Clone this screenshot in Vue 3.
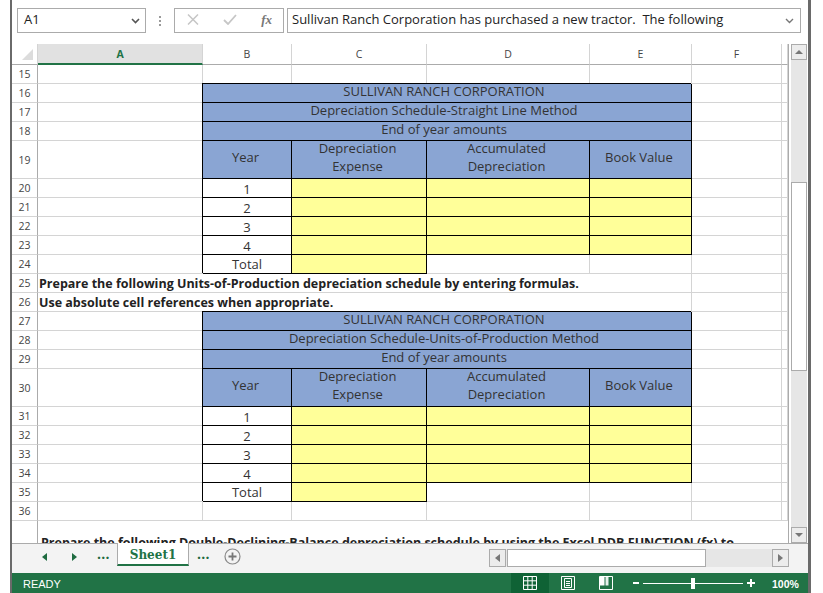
<template>
  <div class="window">
    <div class="formula-bar">
      <div class="name-box">
        <span>A1</span>
        <svg class="chev" width="9" height="6" viewBox="0 0 9 6"><path d="M1 1l3.5 3.5L8 1" fill="none" stroke="#555" stroke-width="1.6" /></svg>
      </div>
      <div class="dots"><i></i><i></i><i></i></div>
      <div class="fx-box">
        <svg width="12" height="11" viewBox="0 0 12 11"><path d="M1 .5l10 10M11 .5L1 10.500" fill="none" stroke="#c6c6c6" stroke-width="1.5" /></svg>
        <svg width="14" height="11" viewBox="0 0 14 11"><path d="M1 6l4 4 8-9" fill="none" stroke="#c6c6c6" stroke-width="1.8" /></svg>
        <span class="fx">fx</span>
      </div>
      <div class="formula-input">
        <span>Sullivan Ranch Corporation has purchased a new tractor.&nbsp; The following</span>
        <svg class="chev" width="9" height="6" viewBox="0 0 9 6"><path d="M1 1l3.5 3.5L8 1" fill="none" stroke="#777" stroke-width="1.4" /></svg>
      </div>
    </div>

    <div class="sheet-area">
      <div class="sheet">
        <div class="grid">
          <div class="col-head corner"><b></b></div>
          <div v-for="c in columns" :key="c" class="col-head" :class="{ selected: c === 'A' }">{{ c }}</div>
          <template v-for="row in rows" :key="row.num">
            <div class="row-head">{{ row.num }}</div>
            <div
              v-for="(cell, i) in row.cells"
              :key="i"
              class="cell"
              :class="cell.type"
              :style="{ gridColumn: 'span ' + (cell.span || 1) }"
            >
              <span v-if="cell.lines"><template v-for="l in cell.lines" :key="l">{{ l }}<br /></template></span>
              <span v-else>{{ cell.text }}</span>
            </div>
          </template>
        </div>
      </div>
      <div class="vscroll">
        <div class="sb-btn"><span class="tri up"></span></div>
        <div class="v-track"><div class="v-thumb"></div></div>
        <div class="sb-btn"><span class="tri down"></span></div>
      </div>
    </div>

    <div class="tab-bar">
      <div class="tab-nav">
        <span class="tri g-left"></span>
        <span class="tri g-right"></span>
      </div>
      <span class="more first">...</span>
      <div class="tab">Sheet1</div>
      <span class="more">...</span>
      <svg class="add" width="17" height="17" viewBox="0 0 17 17">
        <circle cx="8.5" cy="8.5" r="7.5" fill="none" stroke="#8a8a8a" stroke-width="1.2" />
        <path d="M8.500 4.500v8M4.500 8.500h8" stroke="#777" stroke-width="1.800" />
      </svg>
      <div class="hscroll">
        <div class="sb-btn h"><span class="tri h-left"></span></div>
        <div class="h-track"><div class="h-thumb"></div></div>
        <div class="sb-btn h"><span class="tri h-right"></span></div>
      </div>
    </div>

    <div class="status-bar">
      <span class="ready">READY</span>
      <div class="views">
        <div class="view active">
          <svg width="14" height="14" viewBox="0 0 14 14"><path d="M.5.5h13v13H.5zM.5 4.800h13M.5 9.200h13M4.800.5v13M9.200.5v13" fill="none" stroke="#fff" /></svg>
        </div>
        <div class="view">
          <svg width="14" height="14" viewBox="0 0 14 14"><path d="M.5.5h13v13H.5z" fill="none" stroke="#fff" /><path d="M3.500 2.500h7v9h-7zM5 5.500h4M5 7.500h4M5 9.500h4" fill="none" stroke="#fff" /></svg>
        </div>
        <div class="view">
          <svg width="14" height="14" viewBox="0 0 14 14"><path d="M.5.5h13v13H.5z" fill="none" stroke="#fff" /><path d="M1 1h4.500v8.500H1z" fill="#fff" /><path d="M6.500 1H9.500v8.500H6.500z" fill="#e8f1ec" /></svg>
        </div>
      </div>
      <div class="zoom">
        <span class="minus"></span>
        <div class="slider"><i></i></div>
        <span class="plus"></span>
      </div>
      <span class="pct">100%</span>
    </div>
  </div>
</template>

<script setup>
const columns = ['A', 'B', 'C', 'D', 'E', 'F', '']

const rowHeights = { 19: 38, 30: 38 }

// blank grid row: one plain cell per column
function blank() {
  return Array.from({ length: 7 }, () => ({ type: 'plain' }))
}

function trailing() {
  return [{ type: 'plain' }, { type: 'plain' }]
}

function scheduleRows(start, method) {
  const out = []
  const titles = ['SULLIVAN RANCH CORPORATION', method, 'End of year amounts']
  titles.forEach((t, i) => {
    out.push({
      num: start + i,
      cells: [{ type: 'plain' }, { type: 'head title', span: 4, text: t }, ...trailing()]
    })
  })
  out.push({
    num: start + 3,
    cells: [
      { type: 'plain' },
      { type: 'head', text: 'Year' },
      { type: 'head', lines: ['Depreciation', 'Expense'] },
      { type: 'head', lines: ['Accumulated', 'Depreciation'] },
      { type: 'head', text: 'Book Value' },
      ...trailing()
    ]
  })
  for (let y = 1; y <= 4; y++) {
    out.push({
      num: start + 3 + y,
      cells: [
        { type: 'plain' },
        { type: 'year num', text: String(y) },
        { type: 'input' },
        { type: 'input' },
        { type: 'input' },
        ...trailing()
      ]
    })
  }
  out.push({
    num: start + 8,
    cells: [
      { type: 'plain' },
      { type: 'year', text: 'Total' },
      { type: 'input' },
      { type: 'plain' },
      { type: 'plain' },
      ...trailing()
    ]
  })
  return out
}

function note(num, text) {
  return { num, cells: [{ type: 'note', span: 5, text }, ...trailing()] }
}

const rows = [
  { num: 15, cells: blank() },
  ...scheduleRows(16, 'Depreciation Schedule-Straight Line Method'),
  note(25, 'Prepare the following Units-of-Production depreciation schedule by entering formulas.'),
  note(26, 'Use absolute cell references when appropriate.'),
  ...scheduleRows(27, 'Depreciation Schedule-Units-of-Production Method'),
  { num: 36, cells: blank() },
  {
    num: '',
    cells: [
      {
        type: 'note tail',
        span: 7,
        text: 'Prepare the following Double-Declining-Balance depreciation schedule by using the Excel DDB FUNCTION (fx) to'
      }
    ]
  }
]

const gridRows = '21px ' + rows.map((r) => (rowHeights[r.num] || (r.num === '' ? 60 : 19)) + 'px').join(' ')
</script>

<style scoped>
.window {
  box-sizing: border-box;
  width: 801px;
  height: 593px;
  margin-left: 10px;
  border-left: 2px solid #6a6a6a;
  border-right: 3px solid #6a6a6a;
  display: flex;
  flex-direction: column;
  font-family: "Open Sans", "Liberation Sans", sans-serif;
  color: #222;
  overflow: hidden;
}

.formula-bar {
  height: 44px;
  flex: none;
  box-sizing: border-box;
  padding: 8px 8px 11px 5px;
  display: flex;
  background: #fff;
  font-size: 12px;
}

.name-box,
.fx-box,
.formula-input {
  box-sizing: border-box;
  border: 1px solid #ababab;
  display: flex;
  align-items: center;
  flex: none;
  padding-bottom: 4px;
}

.fx-box {
  padding-bottom: 2px;
}

.name-box {
  width: 129px;
  padding-left: 6px;
  padding-right: 5px;
  justify-content: space-between;
  font-size: 13px;
}

.chev {
  margin-top: 4px;
}

.dots {
  width: 28px;
  flex: none;
  display: flex;
  flex-direction: column;
  align-items: center;
  justify-content: center;
  gap: 2px;
}

.dots i {
  width: 2px;
  height: 2px;
  background: #9a9a9a;
}

.fx-box {
  width: 110px;
  padding-left: 12px;
  padding-right: 11px;
  justify-content: space-between;
}

.fx {
  font-family: "Liberation Serif", serif;
  font-style: italic;
  font-weight: 700;
  font-size: 13px;
  color: #777;
}

.formula-input {
  width: 514px;
  margin-left: 3px;
  padding-left: 4px;
  padding-right: 6px;
  justify-content: space-between;
  font-size: 13px;
  white-space: nowrap;
}

.sheet-area {
  flex: none;
  height: 499px;
  display: flex;
}

.sheet {
  width: 777px;
  flex: none;
  box-sizing: border-box;
  border-right: 1px solid #ababab;
  overflow: hidden;
}

.grid {
  display: grid;
  grid-template-columns: 26px 165px 89px 135px 163px 102px 90px 6px;
  grid-template-rows: v-bind(gridRows);
}

.col-head,
.row-head,
.cell {
  box-sizing: border-box;
  min-width: 0;
}

.col-head {
  border-right: 1px solid #d4d4d4;
  border-bottom: 1px solid #ababab;
  display: flex;
  align-items: center;
  justify-content: center;
  font-size: 10.5px;
  color: #444;
  background: #fff;
}

.col-head.corner {
  border-right-color: #d4d4d4;
  position: relative;
}

.corner b {
  position: absolute;
  right: 4px;
  bottom: 4px;
  width: 0;
  height: 0;
  border-left: 11px solid transparent;
  border-bottom: 11px solid #dcdcdc;
}

.col-head.selected {
  background: #e1e1e1;
  border-bottom: 2px solid #217346;
  color: #217346;
  font-weight: 700;
}

.row-head {
  border-right: 1px solid #ababab;
  border-bottom: 1px solid #d4d4d4;
  display: flex;
  align-items: center;
  justify-content: center;
  font-size: 10.5px;
  color: #444;
}

.cell {
  border-right: 1px solid #d4d4d4;
  border-bottom: 1px solid #d4d4d4;
  display: flex;
  font-size: 13px;
  color: #333;
  white-space: nowrap;
  line-height: 18px;
  background: #fff;
}

.head,
.year,
.input {
  border-right-color: #000;
  border-bottom-color: #000;
  box-shadow: -1px -1px 0 0 #000;
}

.head {
  background: #8aa5d3;
  align-items: center;
  justify-content: center;
  text-align: center;
  padding: 0 3px 6px 0;
}

.head.title {
  padding: 0 6px 4px 0;
}

.year {
  align-items: center;
  justify-content: center;
  padding-bottom: 1px;
}

.year.num {
  padding: 1px 0 0;
}

.input {
  background: #ffff99;
}

.note {
  font-size: 12.5px;
  font-weight: 700;
  color: #222;
  align-items: flex-start;
  padding: 1px 0 0 1px;
  overflow: visible;
}

.tail {
  border: 0;
  padding: 13px 0 0 3px;
}

.vscroll {
  width: 19px;
  flex: none;
  box-sizing: border-box;
  padding-left: 2px;
  padding-right: 1px;
  display: flex;
  flex-direction: column;
  background: #fff;
}

.sb-btn {
  height: 16px;
  flex: none;
  box-sizing: border-box;
  border: 1px solid #ababab;
  background: #ececec;
  display: flex;
  align-items: center;
  justify-content: center;
}

.tri {
  width: 0;
  height: 0;
  display: block;
  border: 4px solid transparent;
}

.tri.up {
  border-top: 0;
  border-bottom: 4px solid #777;
}

.tri.down {
  border-bottom: 0;
  border-top: 4px solid #777;
}

.v-track {
  flex: 1;
  background: #e6e6e6;
  padding-top: 122px;
}

.v-thumb {
  box-sizing: border-box;
  height: 189px;
  border: 1px solid #ababab;
  background: #fff;
}

.tab-bar {
  height: 30px;
  flex: none;
  box-sizing: border-box;
  border-top: 1px solid #ababab;
  background: #f3f3f3;
  display: flex;
  align-items: flex-start;
  position: relative;
}

.tab-nav {
  width: 85px;
  flex: none;
  box-sizing: border-box;
  padding: 9px 0 0 30px;
  display: flex;
  gap: 25px;
}

.g-left {
  border-left: 0;
  border-right: 5px solid #1e6b40;
}

.g-right {
  border-right: 0;
  border-left: 5px solid #1e6b40;
}

.more {
  font-size: 14px;
  font-weight: 700;
  color: #1e6b40;
  line-height: 20px;
  letter-spacing: 0.3px;
}

.more.first {
  width: 20px;
}

.tab {
  width: 72px;
  height: 23px;
  flex: none;
  box-sizing: border-box;
  margin-top: -1px;
  margin-right: 8px;
  padding-top: 3px;
  background: #fff;
  border-left: 1px solid #ababab;
  border-right: 1px solid #ababab;
  border-bottom: 2px solid #217346;
  color: #217346;
  font-family: "DejaVu Serif", serif;
  font-weight: 700;
  font-size: 12px;
  text-align: center;
  line-height: 18px;
}

.add {
  margin: 4px 0 0 14px;
}

.hscroll {
  position: absolute;
  left: 477px;
  top: 5px;
  width: 300px;
  height: 18px;
  display: flex;
}

.sb-btn.h {
  width: 17px;
  height: 18px;
}

.h-track {
  flex: 1;
  background: #e6e6e6;
  padding-left: 1px;
}

.h-thumb {
  width: 199px;
  height: 18px;
  box-sizing: border-box;
  border: 1px solid #ababab;
  background: #fff;
}

.h-left {
  border-left: 0;
  border-right: 5px solid #777;
}

.h-right {
  border-right: 0;
  border-left: 5px solid #777;
}

.status-bar {
  flex: 1;
  background: #217346;
  color: #fff;
  display: flex;
  align-items: center;
  font-family: "Liberation Sans", sans-serif;
  font-size: 11px;
  padding-left: 11px;
}

.ready {
  width: 488px;
  flex: none;
  padding-top: 2px;
}

.views {
  display: flex;
  align-self: stretch;
  flex: none;
}

.view {
  width: 38px;
  display: flex;
  align-items: center;
  justify-content: center;
}

.view.active {
  background: #0f6235;
}

.zoom {
  margin-left: 8px;
  display: flex;
  align-items: center;
  flex: none;
}

.minus {
  width: 6px;
  height: 2px;
  background: #fff;
}

.slider {
  width: 100px;
  height: 1px;
  margin: 0 4px;
  background: #fff;
  position: relative;
}

.slider i {
  position: absolute;
  left: 48px;
  top: -5px;
  width: 4px;
  height: 11px;
  background: #fff;
}

.plus {
  width: 8px;
  height: 8px;
  background:
    linear-gradient(#fff, #fff) center / 8px 2px no-repeat,
    linear-gradient(#fff, #fff) center / 2px 8px no-repeat;
}

.pct {
  margin-left: 17px;
  font-weight: 700;
  font-size: 10.5px;
  padding-top: 2px;
}
</style>
